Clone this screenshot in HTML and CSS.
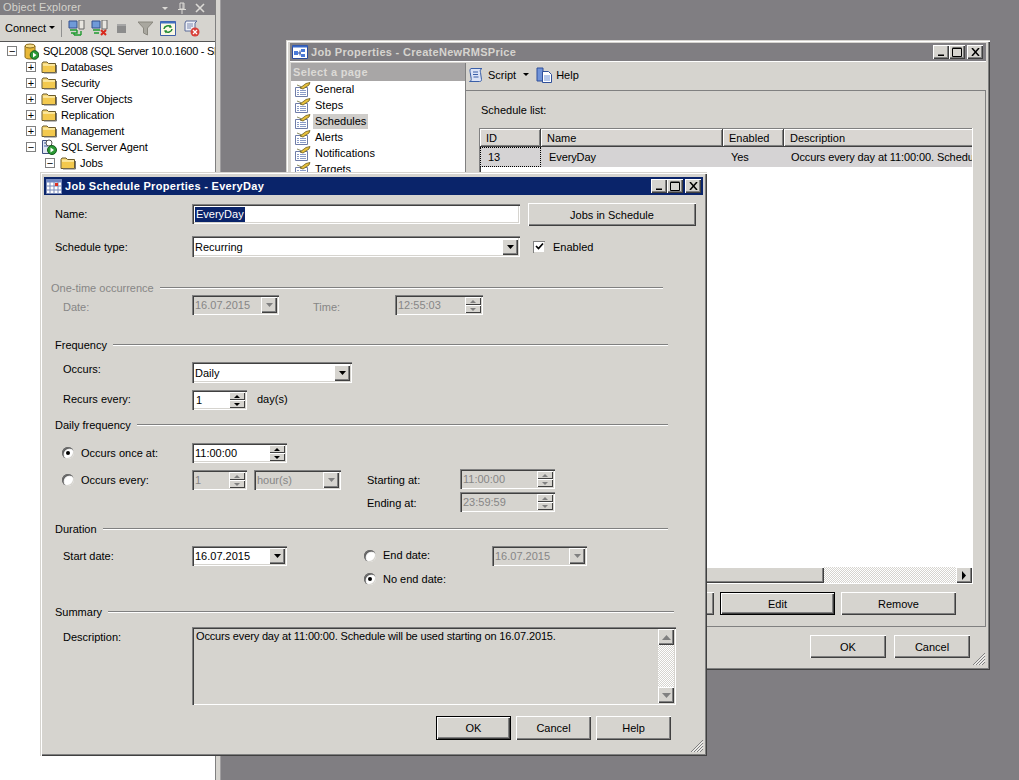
FILE: index.html
```html
<!DOCTYPE html>
<html lang="en">
<head>
<meta charset="utf-8">
<title>Job Schedule Properties</title>
<link rel="stylesheet" href="styles.css">
</head>
<body>
<svg class="defs" width="0" height="0" aria-hidden="true">
  <symbol id="folder" viewBox="0 0 16 16">
    <path d="M1 4.500 2 3h4l1.500 1.500H14.500V13.500H1z" fill="#f7d774" stroke="#6b5a2a"/>
    <path d="M2 6.500h12v6.500H2z" fill="#f3c94e"/>
    <path d="M2 6h12" stroke="#fff6c8"/>
    <path d="M15.500 6v8H3" stroke="#777" fill="none"/>
  </symbol>
  <symbol id="page" viewBox="0 0 17 16">
    <path d="M1.500 6.500h12v9h-12z" fill="#fff" stroke="#6f7da8"/>
    <path d="M3 9.500h2M6 9.500h6M3 11.500h2M6 11.500h6M3 13.500h2M6 13.500h6" stroke="#8a9cc8"/>
    <path d="M6 7 12 2.500 16 1.500 15 4 9 8z" fill="#e8c13c" stroke="#6a5a1a" stroke-width=".8"/>
    <path d="M3 4 8 6" stroke="#8a8a60"/>
  </symbol>
</svg>

<div class="desktop">
  <aside class="explorer">
    <div class="explorer-main">
      <div class="explorer-head">
        <span class="explorer-title">Object Explorer</span>
        <span class="head-tools">
          <svg width="8" height="8" viewBox="0 0 8 8"><path d="M1 3h6L4 6z" fill="#dcdad6"/></svg>
          <svg width="10" height="12" viewBox="0 0 10 12"><path d="M3 1h4v6H3zM1 7.500h8M5 8v4M6 1v6" stroke="#dcdad6" fill="none"/></svg>
          <svg width="10" height="10" viewBox="0 0 10 10"><path d="M1 1l8 8M9 1l-8 8" stroke="#dcdad6" stroke-width="1.600"/></svg>
        </span>
      </div>
      <div class="explorer-bar">
        <span class="connect">Connect</span>
        <svg class="caret" width="6" height="4" viewBox="0 0 6 4"><path d="M0 0h6L3 3z" fill="#000"/></svg>
        <span class="bar-sep"></span>
        <svg class="bar-icon gap6" width="17" height="16" viewBox="0 0 17 16"><path d="M1 1h8v7H1z" fill="#6f9ad8" stroke="#34508c"/><path d="M11 0h5v9h-5z" fill="#e8e6e0" stroke="#666"/><path d="M2 10h7M3 13h6v-3M6 13v2M6 15h7M13 15v-4" stroke="#1f9a30" stroke-width="1.400" fill="none"/></svg>
        <svg class="bar-icon gap6" width="17" height="16" viewBox="0 0 17 16"><path d="M1 1h8v7H1z" fill="#6f9ad8" stroke="#34508c"/><path d="M11 0h5v9h-5z" fill="#e8e6e0" stroke="#666"/><path d="M2 10h7M3 13h5" stroke="#1f9a30" stroke-width="1.400"/><path d="M10 10l5 5M15 10l-5 5" stroke="#d8281c" stroke-width="2"/></svg>
        <svg class="bar-icon gap10" width="14" height="16" viewBox="0 0 14 16"><path d="M3 4h9v9H3z" fill="#8c8c8c"/><path d="M3 4h9v2H3z" fill="#a6a6a6"/></svg>
        <svg class="bar-icon gap7" width="15" height="16" viewBox="0 0 15 16"><path d="M0 2h15L9.500 8v7L5.500 13V8z" fill="#a9a79f" stroke="#8a887f"/></svg>
        <svg class="bar-icon gap7" width="16" height="16" viewBox="0 0 16 16"><path d="M.5 1.500h15v14H.5z" fill="#fbf8e4" stroke="#3f5fa8"/><path d="M.5 1.500h15v2H.5z" fill="#3f6fc0"/><path d="M4 9a4 3.500 0 0 1 7-2M12 9a4 3.500 0 0 1-7 2" stroke="#1f8a30" stroke-width="1.500" fill="none"/><path d="M10 4.500l2 3-3 .2zM6 13.500l-2-3 3-.2z" fill="#1f8a30"/></svg>
        <svg class="bar-icon" width="17" height="17" viewBox="0 0 17 17"><path d="M3 1h11l-2 2v8H2V3z" fill="#eef0f6" stroke="#5a6a98"/><path d="M4 4h6M4 6h6M4 8h4" stroke="#7a88b0"/><circle cx="12" cy="12" r="4.500" fill="#d8403a"/><path d="M10 10l4 4M14 10l-4 4" stroke="#fff" stroke-width="1.300"/></svg>
      </div>
      <ul class="tree">
        <li class="node lvl0"><span class="twist">−</span><svg class="tree-icon srv" width="15" height="17" viewBox="0 0 15 17"><path d="M1 3v11c0 1 2 2 5 2s5-1 5-2V3z" fill="#e8b838" stroke="#8a6a1a"/><ellipse cx="6" cy="3" rx="5" ry="2" fill="#f6dc88" stroke="#8a6a1a"/><circle cx="10.500" cy="12" r="4.300" fill="#2a9a34" stroke="#145a1c"/><path d="M9 9.500l3.500 2.500L9 14.500z" fill="#fff"/></svg><span>SQL2008 (SQL Server 10.0.1600 - SEMA\Administrator)</span></li>
        <li class="node lvl1"><span class="twist">+</span><svg class="tree-icon" width="16" height="16"><use href="#folder"/></svg><span>Databases</span></li>
        <li class="node lvl1"><span class="twist">+</span><svg class="tree-icon" width="16" height="16"><use href="#folder"/></svg><span>Security</span></li>
        <li class="node lvl1"><span class="twist">+</span><svg class="tree-icon" width="16" height="16"><use href="#folder"/></svg><span>Server Objects</span></li>
        <li class="node lvl1"><span class="twist">+</span><svg class="tree-icon" width="16" height="16"><use href="#folder"/></svg><span>Replication</span></li>
        <li class="node lvl1"><span class="twist">+</span><svg class="tree-icon" width="16" height="16"><use href="#folder"/></svg><span>Management</span></li>
        <li class="node lvl1"><span class="twist">−</span><svg class="tree-icon" width="16" height="16" viewBox="0 0 16 16"><path d="M1.500 1.500h7v13h-7z" fill="#dfe4f2" stroke="#3f4f80"/><path d="M3 4h4M3 7h4" stroke="#4060a8"/><circle cx="8" cy="4" r="3" fill="#fff" stroke="#555"/><circle cx="11" cy="11" r="4.500" fill="#2a9a34" stroke="#145a1c"/><path d="M9.500 8.500l3.500 2.500-3.500 2.500z" fill="#fff"/></svg><span>SQL Server Agent</span></li>
        <li class="node lvl2"><span class="twist">−</span><svg class="tree-icon" width="16" height="16"><use href="#folder"/></svg><span>Jobs</span></li>
        <li class="node lvl3"><span class="job-chip"></span></li>
      </ul>
    </div>
    <div class="explorer-rail"></div>
  </aside>

  <section class="window job-window">
    <header class="titlebar inactive">
      <svg class="title-icon" width="16" height="16" viewBox="0 0 16 16"><path d="M.5 1.500h15v13H.5z" fill="#fff" stroke="#2a4a9a"/><path d="M.5 1.500h15v2H.5z" fill="#3a6ac8"/><path d="M2 7h4v4H2zM9 5h4v3H9zM9 10h4v3H9z" fill="#4a7ad8"/><path d="M6 9h3M8 6.500v5" stroke="#2a4a9a"/></svg>
      <span class="title-text">Job Properties - CreateNewRMSPrice</span>
      <span class="title-buttons">
        <span class="tb-btn"><svg width="8" height="8" viewBox="0 0 8 8"><path d="M1 6.500h6v1.500H1z" fill="#000"/></svg></span>
        <span class="tb-btn"><svg width="10" height="10" viewBox="0 0 10 10"><path d="M.5 1.500h9v8h-9zM.5 1h9" fill="none" stroke="#000"/></svg></span>
        <span class="tb-btn close"><svg width="9" height="8" viewBox="0 0 9 8"><path d="M1 0l7 8M8 0 1 8" stroke="#000" stroke-width="1.500"/></svg></span>
      </span>
    </header>
    <div class="job-body">
      <nav class="pages">
        <div class="pages-title">Select a page</div>
        <ul class="page-list">
          <li class="page-item"><svg width="17" height="16"><use href="#page"/></svg><span>General</span></li>
          <li class="page-item"><svg width="17" height="16"><use href="#page"/></svg><span>Steps</span></li>
          <li class="page-item current"><svg width="17" height="16"><use href="#page"/></svg><span>Schedules</span></li>
          <li class="page-item"><svg width="17" height="16"><use href="#page"/></svg><span>Alerts</span></li>
          <li class="page-item"><svg width="17" height="16"><use href="#page"/></svg><span>Notifications</span></li>
          <li class="page-item"><svg width="17" height="16"><use href="#page"/></svg><span>Targets</span></li>
        </ul>
      </nav>
      <div class="job-main">
        <div class="job-tools">
          <svg width="16" height="16" viewBox="0 0 16 16"><path d="M3 1.500h11c-2 1-2 2-1.500 4l1 7c.3 1.500-1 2-2 2H1.500c1.500-.5 2-1.500 1.700-3l-1-6C2 4 1.500 2 3 1.500z" fill="#dbe3f6" stroke="#3a5fa8"/><path d="M5 5h5M5 7.500h5M5.500 10h5" stroke="#3a5fa8"/></svg>
          <span class="tool-label">Script</span>
          <svg class="tool-caret" width="6" height="4" viewBox="0 0 6 4"><path d="M0 0h6L3 3z" fill="#000"/></svg>
          <svg class="tool-help" width="16" height="17" viewBox="0 0 16 17"><path d="M1 2h6v13H1z" fill="#6f92d8" stroke="#2e4f9a"/><path d="M6.500 5.500h6l3 3v8h-9z" fill="#fff" stroke="#2e4f9a"/><path d="M8 10h6M8 12h6M8 14h6" stroke="#6f92d8"/></svg>
          <span class="tool-label">Help</span>
        </div>
        <div class="job-panel">
          <div class="job-content">
            <div class="list-label">Schedule list:</div>
            <div class="grid-box">
              <div class="grid-view">
                <div class="grid-row">
                  <span class="gh c-id">ID</span>
                  <span class="gh c-name">Name</span>
                  <span class="gh c-enabled">Enabled</span>
                  <span class="gh c-desc">Description</span>
                </div>
                <div class="grid-row data">
                  <span class="gd c-id focus">13</span>
                  <span class="gd c-name">EveryDay</span>
                  <span class="gd c-enabled">Yes</span>
                  <span class="gd c-desc">Occurs every day at 11:00:00. Schedule will be used starting on 16.07.2015.</span>
                </div>
              </div>
              <div class="hscroll">
                <span class="hthumb"></span>
                <span class="htrack"></span>
                <span class="sbtn"><svg width="6" height="9" viewBox="0 0 6 9"><path d="M1 0l4 4.500L1 9z" fill="#000"/></svg></span>
              </div>
            </div>
            <div class="job-actions">
              <button class="btn job-btn">Add...</button>
              <button class="btn job-btn default">Edit</button>
              <button class="btn job-btn">Remove</button>
            </div>
          </div>
        </div>
        <div class="job-footer">
          <button class="btn foot-btn">OK</button>
          <button class="btn foot-btn">Cancel</button>
          <svg class="grip job-grip" width="14" height="14" viewBox="0 0 14 14"><path d="M13 1 1 13M13 4 4 13M13 7 7 13M13 10 10 13" stroke="#808080"/><path d="M13 2.500 2.500 13M13 5.500 5.500 13M13 8.500 8.500 13" stroke="#fff"/></svg>
        </div>
      </div>
    </div>
  </section>

  <section class="window dialog">
    <header class="titlebar">
      <svg class="title-icon" width="16" height="16" viewBox="0 0 16 16"><path d="M.5 1.500h15v14H.5z" fill="#fff" stroke="#7a8ab8"/><path d="M.5 1.500h15v3H.5z" fill="#6f86c0"/><path d="M4 4v11M8 4v11M12 4v11M1 8h14M1 12h14" stroke="#7a8ab8"/><path d="M9 5h3v3H9z" fill="#e03020"/></svg>
      <span class="title-text">Job Schedule Properties - EveryDay</span>
      <span class="title-buttons">
        <span class="tb-btn"><svg width="8" height="8" viewBox="0 0 8 8"><path d="M1 6.500h6v1.500H1z" fill="#000"/></svg></span>
        <span class="tb-btn"><svg width="10" height="10" viewBox="0 0 10 10"><path d="M.5 1.500h9v8h-9zM.5 1h9" fill="none" stroke="#000"/></svg></span>
        <span class="tb-btn close"><svg width="9" height="8" viewBox="0 0 9 8"><path d="M1 0l7 8M8 0 1 8" stroke="#000" stroke-width="1.500"/></svg></span>
      </span>
    </header>

    <form class="form">
      <div class="row r-name">
        <label class="lbl top">Name:</label>
        <span class="field w-main"><span class="selected">EveryDay</span></span>
        <button type="button" class="btn jobs-btn">Jobs in Schedule</button>
      </div>
      <div class="row r-type">
        <label class="lbl top">Schedule type:</label>
        <span class="field combo w-main"><span class="val">Recurring</span><span class="cbtn"><svg width="7" height="4" viewBox="0 0 7 4"><path d="M0 0h7L3.500 4z" fill="#000"/></svg></span></span>
        <span class="check"><svg width="9" height="9" viewBox="0 0 9 9"><path d="M1 4l2.500 2.500L8 1.500" fill="none" stroke="#000" stroke-width="1.700"/></svg></span>
        <span class="check-label">Enabled</span>
      </div>

      <div class="section s-once off"><span>One-time occurrence</span><i class="rule"></i></div>
      <div class="row r-date">
        <label class="lbl sub off">Date:</label>
        <span class="field combo dis w-date1"><span class="val">16.07.2015</span><span class="cbtn"><svg width="7" height="4" viewBox="0 0 7 4"><path d="M0 0h7L3.500 4z" fill="#808080"/></svg></span></span>
        <label class="lbl off time-lbl">Time:</label>
        <span class="field spin dis w-time"><span class="val">12:55:03</span><span class="spins"><b class="up"></b><b class="down"></b></span></span>
      </div>

      <div class="section s-freq"><span>Frequency</span><i class="rule"></i></div>
      <div class="row r-occurs">
        <label class="lbl sub up3">Occurs:</label>
        <span class="field combo w-occurs"><span class="val">Daily</span><span class="cbtn"><svg width="7" height="4" viewBox="0 0 7 4"><path d="M0 0h7L3.500 4z" fill="#000"/></svg></span></span>
      </div>
      <div class="row r-recurs">
        <label class="lbl sub up1">Recurs every:</label>
        <span class="field spin w-num"><span class="val big">1</span><span class="spins on"><b class="up"></b><b class="down"></b></span></span>
        <span class="unit">day(s)</span>
      </div>

      <div class="section s-daily"><span>Daily frequency</span><i class="rule"></i></div>
      <div class="row r-once">
        <span class="radio on"></span>
        <label class="lbl rad">Occurs once at:</label>
        <span class="field spin w-long"><span class="val">11:00:00</span><span class="spins on"><b class="up"></b><b class="down"></b></span></span>
      </div>
      <div class="daily-grid">
        <div class="row r-every">
          <span class="radio"></span>
          <label class="lbl rad">Occurs every:</label>
          <span class="field spin dis w-num"><span class="val">1</span><span class="spins"><b class="up"></b><b class="down"></b></span></span>
          <span class="field combo dis w-hour"><span class="val">hour(s)</span><span class="cbtn"><svg width="7" height="4" viewBox="0 0 7 4"><path d="M0 0h7L3.500 4z" fill="#808080"/></svg></span></span>
        </div>
        <div class="range">
          <div class="row r-range">
            <label class="lbl range-lbl">Starting at:</label>
            <span class="field spin dis w-long"><span class="val">11:00:00</span><span class="spins"><b class="up"></b><b class="down"></b></span></span>
          </div>
          <div class="row r-range">
            <label class="lbl range-lbl">Ending at:</label>
            <span class="field spin dis w-long"><span class="val">23:59:59</span><span class="spins"><b class="up"></b><b class="down"></b></span></span>
          </div>
        </div>
      </div>

      <div class="section s-dur"><span>Duration</span><i class="rule"></i></div>
      <div class="dur-grid">
        <div class="row r-start">
          <label class="lbl sub">Start date:</label>
          <span class="field combo w-long"><span class="val">16.07.2015</span><span class="cbtn"><svg width="7" height="4" viewBox="0 0 7 4"><path d="M0 0h7L3.500 4z" fill="#000"/></svg></span></span>
        </div>
        <div class="dur-end">
          <div class="row r-end">
            <span class="radio"></span>
            <label class="lbl end-lbl up1">End date:</label>
            <span class="field combo dis w-long"><span class="val">16.07.2015</span><span class="cbtn"><svg width="7" height="4" viewBox="0 0 7 4"><path d="M0 0h7L3.500 4z" fill="#808080"/></svg></span></span>
          </div>
          <div class="row r-noend">
            <span class="radio on"></span>
            <label class="lbl end-lbl">No end date:</label>
          </div>
        </div>
      </div>

      <div class="section s-sum"><span>Summary</span><i class="rule"></i></div>
      <div class="row r-desc">
        <label class="lbl sub desc-lbl">Description:</label>
        <div class="memo">
          <p class="memo-text">Occurs every day at 11:00:00. Schedule will be used starting on 16.07.2015.</p>
          <div class="vscroll">
            <span class="sbtn"><svg width="9" height="5" viewBox="0 0 9 5"><path d="M0 5 4.500 0 9 5z" fill="#808080"/></svg></span>
            <span class="vtrack"></span>
            <span class="sbtn"><svg width="9" height="5" viewBox="0 0 9 5"><path d="M0 0 4.500 5 9 0z" fill="#808080"/></svg></span>
          </div>
        </div>
      </div>
      <div class="dialog-actions">
        <button type="button" class="btn dlg-btn default">OK</button>
        <button type="button" class="btn dlg-btn">Cancel</button>
        <button type="button" class="btn dlg-btn">Help</button>
      </div>
    </form>
    <svg class="grip dlg-grip" width="14" height="14" viewBox="0 0 14 14"><path d="M13 1 1 13M13 4 4 13M13 7 7 13M13 10 10 13" stroke="#808080"/><path d="M13 2.500 2.500 13M13 5.500 5.500 13M13 8.500 8.500 13" stroke="#fff"/></svg>
  </section>
</div>
</body>
</html>
```

FILE: styles.css
```css
* { box-sizing: border-box; }

html, body {
  margin: 0;
  padding: 0;
  height: 100%;
  overflow: hidden;
}

body {
  font: 11px/14px "Liberation Sans", Arial, sans-serif;
  color: #000;
  background: #807e82;
}

.defs { position: absolute; }

ul { list-style: none; margin: 0; padding: 0; }
p { margin: 0; }

.desktop {
  position: relative;
  width: 1019px;
  height: 780px;
  overflow: hidden;
  display: flex;
}

/* Object Explorer */
.explorer {
  width: 222px;
  height: 780px;
  display: flex;
  flex: none;
}

.explorer-main {
  width: 216px;
  display: flex;
  flex-direction: column;
  border-right: 1px solid #808080;
  background: #fff;
  overflow: hidden;
}

.explorer-rail {
  width: 5px;
  background: #d6d4cf;
  border-right: 1px solid #a09ea0;
}

.explorer-head {
  height: 15px;
  flex: none;
  background: #807e82;
  color: #d4d2cc;
  display: flex;
  align-items: center;
  padding: 0 10px 0 3px;
  letter-spacing: .15px;
}

.explorer-title { flex: 1; margin-top: -2px; }

.head-tools {
  display: flex;
  align-items: center;
  gap: 8px;
}

.explorer-bar {
  height: 27px;
  flex: none;
  background: #d6d4cf;
  border-bottom: 1px solid #555;
  display: flex;
  align-items: center;
  padding-left: 5px;
}

.connect { width: 44px; }
.caret { margin-right: 6px; }

.bar-sep {
  width: 1px;
  height: 17px;
  background: #909090;
  margin-right: 6px;
}

.bar-icon { flex: none; }
.gap6 { margin-right: 6px; }
.gap7 { margin-right: 7px; }
.gap10 { margin-right: 10px; }

.tree { padding-top: 1px; }

.node {
  height: 16px;
  display: flex;
  align-items: center;
  white-space: nowrap;
  letter-spacing: -.1px;
}

.lvl0 { padding-left: 7px; letter-spacing: -.25px; }
.lvl1 { padding-left: 26px; }
.lvl2 { padding-left: 45px; }
.lvl3 { padding-left: 80px; }

.twist {
  width: 10px;
  height: 10px;
  flex: none;
  border: 1px solid #808080;
  background: #fff;
  font: 11px/8px "Liberation Sans", sans-serif;
  text-align: center;
  color: #000;
  margin-right: 5px;
}

.tree-icon { margin-right: 4px; flex: none; }
.srv { margin-left: 2px; margin-right: 4px; }

.job-chip {
  width: 15px;
  height: 16px;
  background: #3a6ac8;
  margin-top: 7px;
}

/* Windows */
.window {
  position: absolute;
  background: #d6d4cf;
  box-shadow:
    inset 1px 1px 0 #d6d4cf,
    inset 2px 2px 0 #fff,
    inset -1px -1px 0 #404040,
    inset -2px -2px 0 #808080;
  padding: 3px 4px 4px;
  display: flex;
  flex-direction: column;
}

.job-window { left: 286px; top: 40px; width: 704px; height: 630px; }
.dialog { left: 40px; top: 172px; width: 667px; height: 584px; }

.titlebar {
  height: 18px;
  flex: none;
  display: flex;
  align-items: center;
  background: #0a246a;
  color: #fff;
  font: bold 11px/18px "Liberation Sans", Arial, sans-serif;
  padding-right: 2px;
}

.dialog .titlebar { margin-top: 2px; }

.titlebar.inactive {
  background: #807e82;
  color: #d6d4cf;
  padding-right: 3px;
}

.title-icon { margin: 0 3px 0 2px; flex: none; }
.title-text { flex: 1; letter-spacing: .3px; }

.title-buttons { display: flex; }

.tb-btn {
  width: 16px;
  height: 14px;
  display: flex;
  align-items: center;
  justify-content: center;
  background: #d6d4cf;
  box-shadow: inset 1px 1px 0 #fff, inset -1px -1px 0 #404040, inset -2px -2px 0 #808080;
}

.tb-btn.close { margin-left: 2px; }

/* Job window */
.job-body {
  flex: 1;
  display: flex;
  padding-top: 2px;
  box-shadow: inset 0 1px 0 #fff;
}

.pages {
  width: 175px;
  margin-left: 1px;
  flex: none;
  display: flex;
  flex-direction: column;
  background: #fff;
  border-right: 1px solid #808080;
}

.pages-title {
  height: 18px;
  background: #a8a6a6;
  color: #dcdad6;
  font-weight: bold;
  line-height: 18px;
  padding-left: 2px;
  letter-spacing: .35px;
}

.page-item {
  height: 16px;
  display: flex;
  align-items: center;
  padding-left: 3px;
  gap: 2px;
}

.page-item span { padding: 0 2px; line-height: 15px; }
.page-item.current span { background: #cfcdca; }

.job-main {
  flex: 1;
  display: flex;
  flex-direction: column;
  min-width: 0;
}

.job-tools {
  height: 27px;
  flex: none;
  display: flex;
  align-items: center;
  padding: 0 0 4px 2px;
  gap: 4px;
}

.tool-caret { margin-left: 3px; }
.tool-help { margin-left: 3px; }

.job-panel {
  height: 537px;
  flex: none;
  border-top: 1px solid #808080;
  border-bottom: 1px solid #808080;
  border-right: 1px solid #808080;
  width: 520px;
}

.job-content {
  padding: 12px 13px 0 13px;
  display: flex;
  flex-direction: column;
}

.list-label { height: 25px; padding-left: 2px; }

.grid-box {
  width: 494px;
  height: 456px;
  background: #fff;
  display: flex;
  flex-direction: column;
  box-shadow: inset 1px 1px 0 #808080, inset 2px 2px 0 #404040;
  border-right: 1px solid #fff;
  border-bottom: 1px solid #fff;
  padding: 1px 0 0 1px;
  overflow: hidden;
}

.grid-view { flex: 1; overflow: hidden; }

.grid-row {
  display: grid;
  grid-template-columns: 61px 182px 61px 300px;
  white-space: nowrap;
}

.gh {
  height: 18px;
  line-height: 18px;
  padding-left: 6px;
  background: #d9d6d2;
  box-shadow: inset 1px 1px 0 #fff, inset -1px -1px 0 #808080, inset -2px -2px 0 #d6d4cf;
  border-right: 1px solid #404040;
  border-bottom: 1px solid #404040;
}

.grid-row.data { background: #d5d3d4; }

.gd {
  height: 20px;
  line-height: 20px;
  padding-left: 8px;
  letter-spacing: -.1px;
  overflow: hidden;
}

.gd.c-desc { padding-left: 7px; }
.gd.focus { outline: 1px dotted #000; outline-offset: -1px; }

.hscroll {
  height: 16px;
  flex: none;
  display: flex;
}

.hthumb {
  width: 344px;
  background: #d6d4cf;
  box-shadow: inset 1px 1px 0 #fff, inset -1px -1px 0 #404040, inset -2px -2px 0 #808080;
}

.htrack {
  flex: 1;
  background: repeating-conic-gradient(#fff 0 25%, #d6d4cf 0 50%) 0 0 / 2px 2px;
}

.sbtn {
  width: 16px;
  height: 16px;
  flex: none;
  display: flex;
  align-items: center;
  justify-content: center;
  background: #d6d4cf;
  box-shadow: inset 1px 1px 0 #fff, inset -1px -1px 0 #404040, inset -2px -2px 0 #808080;
}

.job-actions {
  display: flex;
  gap: 6px;
  justify-content: flex-end;
  margin-top: 8px;
  padding-right: 16px;
  height: 23px;
}

.btn {
  font: 11px/14px "Liberation Sans", Arial, sans-serif;
  color: #000;
  background: #d6d4cf;
  border: 0;
  padding: 0;
  box-shadow: inset 1px 1px 0 #fff, inset -1px -1px 0 #404040, inset -2px -2px 0 #808080;
}

.btn.default {
  box-shadow: inset 0 0 0 1px #000, inset 2px 2px 0 #fff, inset -2px -2px 0 #404040, inset -3px -3px 0 #808080;
}

.job-btn { width: 115px; height: 23px; }

.job-footer {
  flex: 1;
  display: flex;
  gap: 8px;
  justify-content: flex-end;
  padding: 8px 16px 0 0;
  position: relative;
}

.foot-btn { width: 76px; height: 23px; }

.grip { position: absolute; }
.job-grip { right: 0; bottom: 0; }
.dlg-grip { right: 3px; bottom: 3px; }

/* Dialog form */
.form {
  flex: 1;
  display: flex;
  flex-direction: column;
}

.row {
  display: flex;
  align-items: center;
}

.lbl {
  flex: none;
  white-space: nowrap;
}

.lbl.top { width: 148px; padding-left: 11px; }
.lbl.sub { width: 148px; padding-left: 19px; }
.up3 { margin-top: -8px; }
.up1 { margin-bottom: 2px; }
.off { color: #868686; }

.field {
  height: 20px;
  display: flex;
  align-items: center;
  background: #fff;
  padding: 2px;
  box-shadow:
    inset 1px 1px 0 #808080,
    inset 2px 2px 0 #404040,
    inset -1px -1px 0 #fff,
    inset -2px -2px 0 #d6d4cf;
}

.field.dis {
  background: #d6d4cf;
  color: #868686;
}

.val { flex: 1; padding-left: 1px; white-space: nowrap; overflow: hidden; }
.val.big { padding-left: 2px; }

.selected {
  background: #0a246a;
  color: #fff;
  margin-left: 1px;
  line-height: 15px;
  padding: 0 1px;
}

.cbtn {
  width: 16px;
  height: 16px;
  flex: none;
  display: flex;
  align-items: center;
  justify-content: center;
  background: #d6d4cf;
  box-shadow: inset 1px 1px 0 #fff, inset -1px -1px 0 #404040, inset -2px -2px 0 #808080;
}

.spins {
  width: 16px;
  height: 16px;
  flex: none;
  display: flex;
  flex-direction: column;
}

.spins b {
  flex: 1;
  display: flex;
  align-items: center;
  justify-content: center;
  background: #d6d4cf;
  box-shadow: inset 1px 1px 0 #fff, inset -1px -1px 0 #404040;
}

.spins b::after {
  content: "";
  border-left: 3px solid transparent;
  border-right: 3px solid transparent;
}

.spins .up::after { border-bottom: 3px solid #808080; }
.spins .down::after { border-top: 3px solid #808080; }
.spins.on .up::after { border-bottom-color: #000; }
.spins.on .down::after { border-top-color: #000; }

.w-main { width: 328px; }
.w-date1 { width: 87px; }
.w-time { width: 88px; }
.w-occurs { width: 160px; height: 21px; }
.w-num { width: 55px; }
.w-long { width: 95px; }
.w-hour { width: 87px; margin-left: 7px; }

.r-name { margin-top: 8px; height: 23px; align-items: flex-start; }
.r-name .lbl { margin-top: 4px; }
.r-name .field { margin-top: 1px; }
.jobs-btn { width: 168px; height: 23px; margin-left: 8px; }

.r-type { margin-top: 10px; height: 21px; }
.r-type .field { height: 21px; }

.check {
  width: 12px;
  height: 12px;
  margin-left: 13px;
  background: #fff;
  display: flex;
  align-items: center;
  justify-content: center;
  box-shadow: inset 1px 1px 0 #808080, inset -1px -1px 0 #d6d4cf;
}

.check-label { margin-left: 8px; }

.section {
  height: 14px;
  display: flex;
  align-items: center;
  padding-left: 11px;
}

.section span { white-space: nowrap; margin-right: 6px; }

.rule {
  flex: 1;
  height: 2px;
  border-top: 1px solid #808080;
  border-bottom: 1px solid #fff;
}

.s-once { margin-top: 24px; padding-left: 7px; margin-right: 40px; }
.s-freq { margin-top: 23px; margin-right: 35px; }
.s-daily { margin-top: 8px; margin-right: 35px; }
.s-dur { margin-top: 10px; margin-right: 35px; }
.s-sum { margin-top: 16px; margin-right: 29px; }

.r-date { height: 20px; }
.r-date .lbl.sub { padding-top: 4px; }
.time-lbl { margin-left: 34px; width: 82px; padding-top: 3px; }

.r-occurs { margin-top: 10px; height: 21px; }
.r-recurs { margin-top: 7px; height: 20px; }
.unit { margin-left: 10px; margin-top: -2px; }

.r-once { margin-top: 11px; height: 20px; }

.radio {
  width: 12px;
  height: 12px;
  flex: none;
  border-radius: 50%;
  background: #fff;
  margin-left: 18px;
  box-shadow: inset 1px 1px 0 #707070, inset 1.500px 1.500px 1px #404040, inset -1px -1px 0 #d6d4cf;
  position: relative;
}

.radio.on::after {
  content: "";
  position: absolute;
  left: 4px;
  top: 4px;
  width: 4px;
  height: 4px;
  border-radius: 50%;
  background: #000;
}

.lbl.rad { width: 118px; padding-left: 7px; }

.daily-grid {
  display: flex;
  height: 43px;
  margin-top: 6px;
}

.r-every { height: 20px; margin-top: 1px; width: 323px; }

.range {
  display: flex;
  flex-direction: column;
  gap: 3px;
}

.r-range { height: 20px; }
.range-lbl { width: 93px; padding-top: 2px; }

.dur-grid {
  display: flex;
  margin-top: 10px;
  height: 43px;
}

.r-start { width: 320px; height: 20px; }

.dur-end { display: flex; flex-direction: column; gap: 3px; }
.r-end, .r-noend { height: 20px; }
.r-end .radio, .r-noend .radio { margin-left: 0; }
.end-lbl { width: 116px; padding-left: 7px; }

.r-desc {
  margin-top: 8px;
  align-items: flex-start;
  height: 78px;
}

.desc-lbl { padding-top: 3px; }

.memo {
  width: 484px;
  height: 78px;
  display: flex;
  padding: 2px;
  box-shadow:
    inset 1px 1px 0 #808080,
    inset 2px 2px 0 #404040,
    inset -1px -1px 0 #fff,
    inset -2px -2px 0 #d6d4cf;
}

.memo-text {
  flex: 1;
  padding: 0 0 0 2px;
  letter-spacing: -.15px;
}

.vscroll {
  width: 16px;
  display: flex;
  flex-direction: column;
}

.vtrack {
  flex: 1;
  background: repeating-conic-gradient(#fff 0 25%, #d6d4cf 0 50%) 0 0 / 2px 2px;
}

.dialog-actions {
  display: flex;
  gap: 5px;
  margin-top: 11px;
  padding-left: 392px;
}

.dlg-btn { width: 75px; height: 24px; }
```
